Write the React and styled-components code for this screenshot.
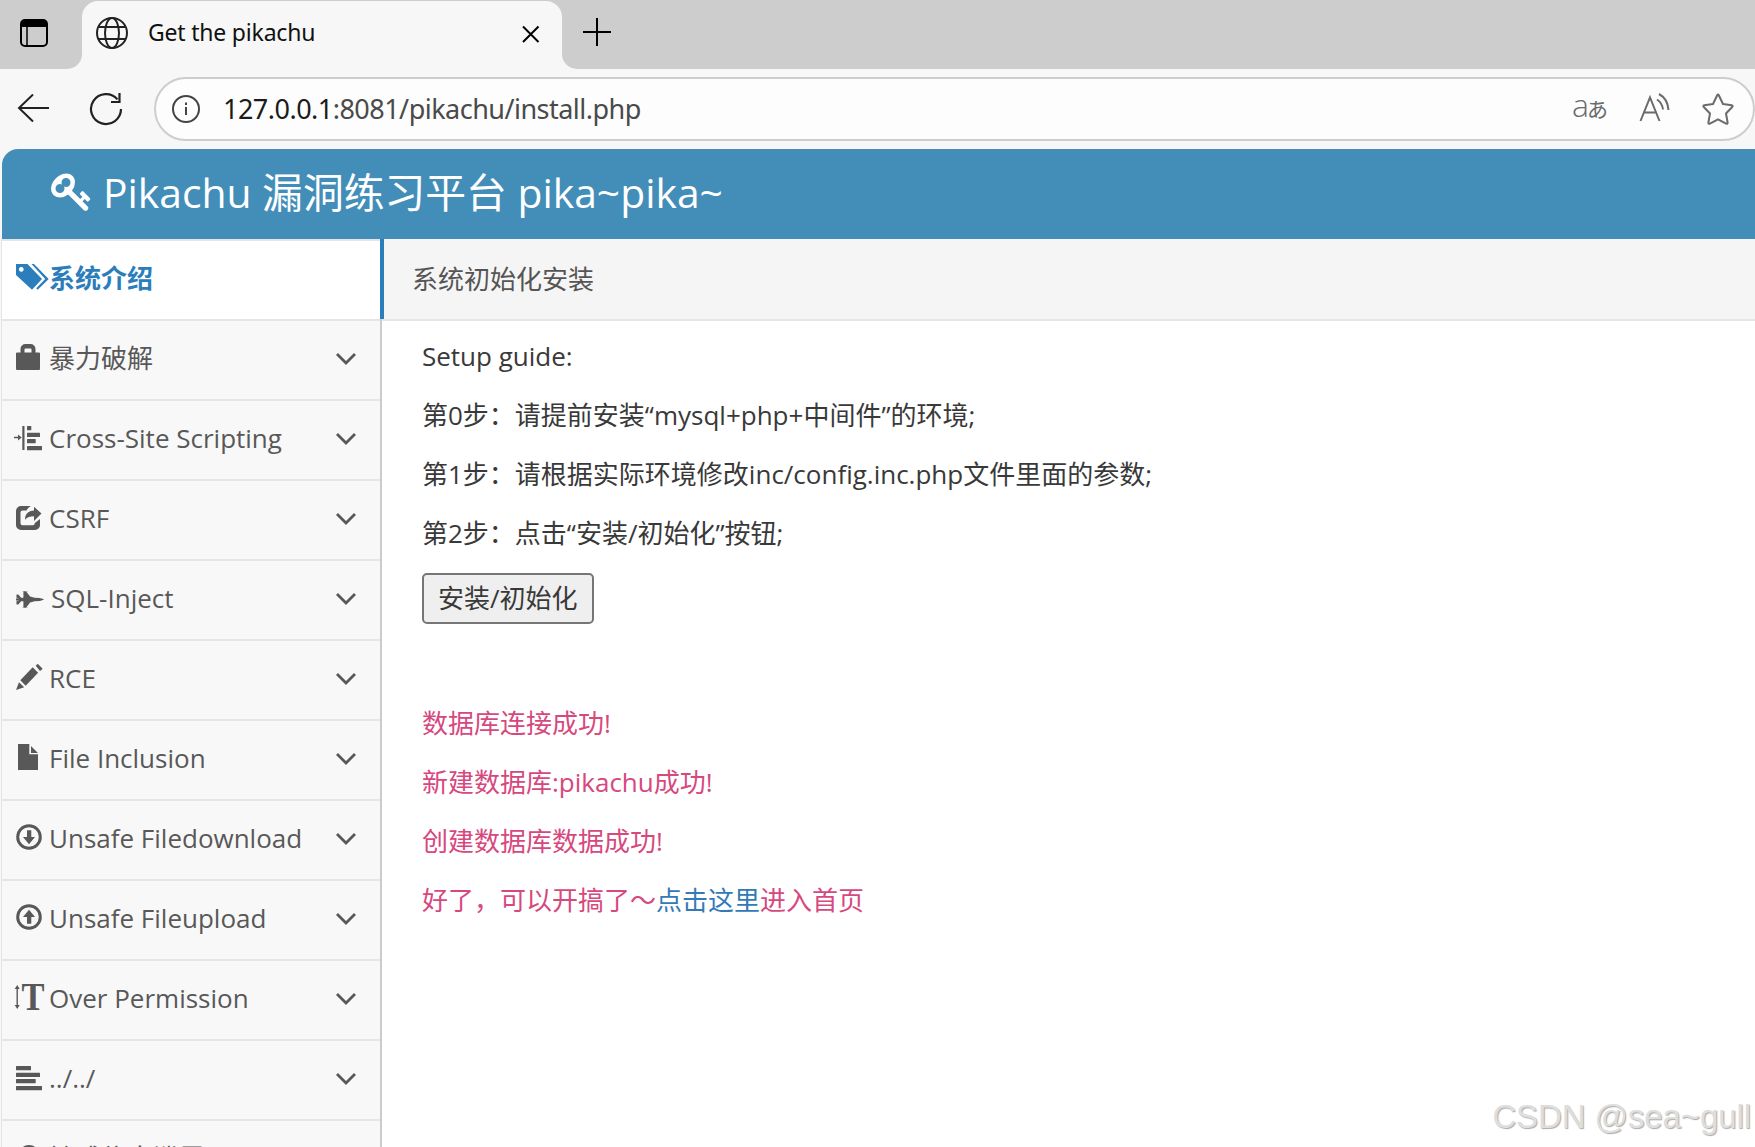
// src/App.jsx
import React from 'react';
import styled, { createGlobalStyle } from 'styled-components';

const GlobalStyle = createGlobalStyle`
  * {
    box-sizing: border-box;
  }

  body {
    margin: 0;
    background: #f7f7f7;
    overflow: hidden;
  }
`;

const Window = styled.div`
  width: 100%;
  height: 100vh;
  display: flex;
  flex-direction: column;
  overflow: hidden;
  font-family: 'Open Sans', 'Noto Sans CJK SC', sans-serif;
  font-size: 26px;
  line-height: 39px;
  color: #393939;
`;

const TabStrip = styled.div`
  display: flex;
  flex: none;
  height: 69px;
`;

const StripStart = styled.div`
  width: 82px;
  padding: 19px 0 0 20px;
  background: #cdcdcd;
  border-bottom-right-radius: 15px;
`;

const TabSlot = styled.div`
  width: 480px;
  padding-top: 1px;
  background: #cdcdcd;
`;

const Tab = styled.div`
  display: flex;
  align-items: center;
  height: 68px;
  padding: 0 21px 4px 14px;
  background: #f7f7f7;
  border-radius: 16px 16px 0 0;
`;

const TabTitle = styled.span`
  flex: 1;
  margin-left: 20px;
  padding-bottom: 2px;
  font-family: 'Noto Sans', sans-serif;
  font-size: 23px;
  letter-spacing: -0.2px;
  color: #111;
`;

const StripEnd = styled.div`
  flex: 1;
  padding: 18px 0 0 21px;
  background: #cdcdcd;
  border-bottom-left-radius: 15px;
`;

const Toolbar = styled.div`
  display: flex;
  flex: none;
  align-items: center;
  height: 80px;
  padding-left: 17px;
`;

const ReloadSlot = styled.span`
  display: flex;
  margin: 0 31px 0 39px;
`;

const AddressBar = styled.div`
  display: flex;
  flex: 1;
  align-items: center;
  height: 64px;
  padding: 0 18px 0 16px;
  background: #fdfdfd;
  border: 2px solid #cdcdcd;
  border-radius: 32px;
`;

const Address = styled.span`
  flex: 1;
  margin-left: 22px;
  padding-bottom: 2px;
  font-family: 'Noto Sans', sans-serif;
  font-size: 27px;
  letter-spacing: -0.52px;
  color: #4a4a4a;

  b {
    font-weight: 400;
    color: #1b1b1b;
  }
`;

const AddressActions = styled.div`
  display: flex;
  align-items: center;
  gap: 30px;
`;

const Page = styled.div`
  display: flex;
  flex: 1;
  flex-direction: column;
  min-height: 0;
  margin-left: 2px;
`;

const Navbar = styled.header`
  display: flex;
  flex: none;
  align-items: flex-start;
  height: 90px;
  padding: 13px 0 0 49px;
  background: #438eb9;
  border-top-left-radius: 16px;
  color: #fff;
  font-size: 40.8px;
  line-height: 60px;
`;

const NavbarKey = styled.svg`
  flex: none;
  width: 42px;
  height: 54px;
  margin-top: 1px;
  fill: #fff;
`;

const Brand = styled.span`
  margin-left: 10px;
  white-space: nowrap;
`;

const Main = styled.div`
  display: flex;
  flex: 1;
  min-height: 0;
`;

const Sidebar = styled.nav`
  flex: none;
  width: 380px;
  background: #f8f8f8;
  border-right: 2px solid #ccc;
  box-shadow: -1px 0 #e5e5e5;
`;

const MenuItem = styled.a`
  display: flex;
  align-items: flex-start;
  position: relative;
  height: 80px;
  padding: 18px 24px 0 12px;
  border-top: 2px solid #e5e5e5;
  background: ${({ $active }) => ($active ? '#fff' : 'transparent')};
  color: ${({ $active }) => ($active ? '#2b7dbc' : '#585858')};
  font-weight: ${({ $active }) => ($active ? 700 : 400)};
  text-decoration: none;

  &::after {
    content: '';
    display: ${({ $active }) => ($active ? 'block' : 'none')};
    position: absolute;
    top: -2px;
    right: -4px;
    width: 4px;
    height: 80px;
    background: #2b7dbc;
  }
`;

const MenuLabel = styled.span`
  flex: 1;
  white-space: nowrap;
  padding-left: ${({ $indent }) => $indent || 0}px;
`;

const MenuIcon = styled.svg`
  flex: none;
  width: 35px;
  height: 34px;
  fill: currentColor;
  overflow: visible;
`;

const Chevron = styled.svg`
  flex: none;
  width: 20px;
  height: 12px;
  margin-top: 14px;
  fill: none;
  stroke: #585858;
  stroke-width: 2.8;
`;

const Content = styled.main`
  flex: 1;
  min-width: 0;
  background: #fff;
`;

const Breadcrumbs = styled.div`
  height: 82px;
  padding: 21px 0 0 30px;
  background: #f5f5f5;
  border-bottom: 2px solid #e5e5e5;
  color: #555;
`;

const Guide = styled.div`
  padding: 16px 0 0 40px;

  p {
    height: 39px;
    margin: 0 0 20px;
    white-space: nowrap;
  }
`;

const InstallButton = styled.button`
  display: block;
  height: 51px;
  margin: 1px 0 80px;
  padding: 0 14px;
  background: #efefef;
  border: 2px solid #767676;
  border-radius: 5px;
  color: inherit;
  font: inherit;
  line-height: 47px;
`;

const Message = styled.p`
  color: #d6487e;

  a {
    color: #337ab7;
    text-decoration: none;
  }
`;

const Watermark = styled.div`
  position: absolute;
  right: 4px;
  bottom: 10px;
  font-family: 'Liberation Sans', sans-serif;
  font-size: 33px;
  line-height: 40px;
  letter-spacing: -0.1px;
  color: #dedede;
  text-shadow: 1px 1px 1px #aaa;
`;

const icons = {
  tags: (
    <>
      <path fillRule="evenodd" d="M2 5h11.500L28 20 18 30.700 2 16zM7.300 8a2.400 2.400 0 1 0 .01 0z" />
      <path d="M17.500 5h2.500L34.700 20 23.700 30.700l-1.500-1.500L31.200 20z" />
    </>
  ),
  lock: (
    <path
      fillRule="evenodd"
      d="M6.500 13.500V10a5 5 0 0 1 5-5h5a5 5 0 0 1 5 5v3.500H25a1 1 0 0 1 1 1V30a1 1 0 0 1-1 1H3a1 1 0 0 1-1-1V14.500a1 1 0 0 1 1-1zM10.500 13.500h7V10.500a1 1 0 0 0-1-1h-5a1 1 0 0 0-1 1z"
    />
  ),
  indent: (
    <>
      <path d="M0 17.700h4V15.500l3.700 3-3.700 3v-2.200H0zM8.300 7h2.200v24H8.300z" />
      <rect x="13" y="7" width="4.300" height="4.300" rx="0.500" />
      <rect x="13" y="13.700" width="13" height="4.300" rx="0.500" />
      <rect x="13" y="20" width="8.700" height="4.300" rx="0.500" />
      <rect x="13" y="27" width="15" height="4.300" rx="0.500" />
    </>
  ),
  share: (
    <>
      <path
        d="M17 7c-2 1-3.500 2.500-4.500 4.500H8.500a2 2 0 0 0-2 2v10.800a2 2 0 0 0 2 2h10.300a2 2 0 0 0 2-2V24L26 20v6a5 5 0 0 1-5 5H7a5 5 0 0 1-5-5V12a5 5 0 0 1 5-5z"
      />
      <path d="M20 7.800l7.500 6.700L20 22v-4.700c-4 0-6.500.8-9 3.500 0-6 3.500-9 9-9.300z" />
    </>
  ),
  jet: (
    <path
      transform="translate(2 6.600) scale(.01448)"
      d="M1920 960q-1 32-288 96l-352 32-224 64h-64l-293 352h69q26 0 45 4.500t19 11.500-19 11.500-45 4.500h-320v-32h64v-416h-160l-192 224h-96l-32-32v-192h32v-32h128v-8l-192-24v-128l192-24v-8h-128v-32h-32v-192l32-32h96l192 224h160v-416h-64v-32h320q26 0 45 4.500t19 11.500-19 11.500-45 4.500h-69l293 352h64l224 64 352 32q128 28 200 52t80 34z"
    />
  ),
  pencil: (
    <path d="M21.700 6.700l1.500-1.500q.5-.5 1 0l4 4q.5.500 0 1L26 12zM18.700 8.300l5.400 5.400-12.400 13-5.400-5.400zM2 31l3-7.700 5.200 5z" />
  ),
  file: <path d="M4 5h11.300v10.300H24V31H4zM17 7l7 7h-7z" />,
  download: (
    <>
      <circle cx="15" cy="18" r="11.300" fill="none" stroke="currentColor" strokeWidth="3" />
      <path d="M13 11.300h4.300V18H21l-6 7.300L9 18h4z" />
    </>
  ),
  upload: (
    <>
      <circle cx="15" cy="18" r="11.300" fill="none" stroke="currentColor" strokeWidth="3" />
      <path d="M13 24.700h4.300V18H21l-6-7.300L9 18h4z" />
    </>
  ),
  height: (
    <>
      <path d="M3.200 6L5.700 10H3.900v16h1.800l-2.500 4-2.500-4h1.800V10H.7z" />
      <text
        x="7.500"
        y="31"
        fontFamily="Liberation Serif, serif"
        fontWeight="700"
        fontSize="39"
        textLength="23"
        lengthAdjust="spacingAndGlyphs"
      >
        T
      </text>
    </>
  ),
  align: (
    <>
      <rect x="2" y="7" width="15" height="4.300" rx="0.500" />
      <rect x="2" y="13.700" width="24" height="4.300" rx="0.500" />
      <rect x="2" y="20" width="19.700" height="4.300" rx="0.500" />
      <rect x="2" y="27" width="26" height="4.300" rx="0.500" />
    </>
  ),
  eye: (
    <path d="M15 6c-6 0-10 5-12 9 2 4 6 9 12 9s10-5 12-9c-2-4-6-9-12-9z" />
  ),
};

const menu = [
  { icon: 'tags', label: '系统介绍', active: true },
  { icon: 'lock', label: '暴力破解' },
  { icon: 'indent', label: 'Cross-Site Scripting' },
  { icon: 'share', label: 'CSRF' },
  { icon: 'jet', label: 'SQL-Inject', indent: 2 },
  { icon: 'pencil', label: 'RCE' },
  { icon: 'file', label: 'File Inclusion' },
  { icon: 'download', label: 'Unsafe Filedownload' },
  { icon: 'upload', label: 'Unsafe Fileupload' },
  { icon: 'height', label: 'Over Permission' },
  { icon: 'align', label: '../../' },
  { icon: 'eye', label: '敏感信息泄露' },
];

const BrowserTabs = () => (
  <TabStrip>
    <StripStart>
      <svg width="28" height="28" viewBox="0 0 28 28" style={{ display: 'block' }}>
        <rect x="1" y="1" width="26" height="26" rx="4" fill="none" stroke="#000" strokeWidth="2" />
        <path d="M1 8V5a4 4 0 0 1 4-4h18a4 4 0 0 1 4 4v3z" />
        <path d="M7 8v19" stroke="#000" strokeWidth="1.500" />
      </svg>
    </StripStart>
    <TabSlot>
      <Tab>
        <svg width="32" height="32" viewBox="0 0 32 32" fill="none" stroke="#222" strokeWidth="2">
          <circle cx="16" cy="16" r="15" />
          <ellipse cx="16" cy="16" rx="7" ry="15" />
          <path d="M2.500 10h27M2.500 22h27" />
        </svg>
        <TabTitle>Get the pikachu</TabTitle>
        <svg width="20" height="20" viewBox="0 0 20 20" stroke="#000" strokeWidth="2">
          <path d="M2 3.500l15.500 15.500M17.500 3.500L2 19" />
        </svg>
      </Tab>
    </TabSlot>
    <StripEnd>
      <svg width="28" height="28" viewBox="0 0 28 28" stroke="#000" strokeWidth="2" style={{ display: 'block' }}>
        <path d="M14 0v28M0 14h28" />
      </svg>
    </StripEnd>
  </TabStrip>
);

const BrowserToolbar = () => (
  <Toolbar>
    <svg width="33" height="30" viewBox="0 0 33 30" fill="none" stroke="#222" strokeWidth="2">
      <path d="M32 14H2M16 0.500L2 14 16 27.500" />
    </svg>
    <ReloadSlot>
      <svg width="34" height="34" viewBox="0 0 34 34" fill="none" stroke="#222" strokeWidth="2.200">
        <path d="M32 17a15 15 0 1 1-3.500-9.600M30.500 1v9H22" />
      </svg>
    </ReloadSlot>
    <AddressBar>
      <svg width="29" height="29" viewBox="0 0 29 29" fill="none" stroke="#444" strokeWidth="2">
        <circle cx="14" cy="14" r="13" />
        <path d="M14 12v8M14 7.500v2.500" />
      </svg>
      <Address>
        <b>127.0.0.1</b>:8081/pikachu/install.php
      </Address>
      <AddressActions>
        <svg width="36" height="48" viewBox="0 0 36 48" fill="#6b6b6b">
          <text x="-1" y="32" fontFamily="Open Sans, sans-serif" fontSize="32" fontWeight="300">a</text>
          <text x="14" y="32" fontFamily="Noto Sans CJK JP, sans-serif" fontSize="21">あ</text>
        </svg>
        <svg width="32" height="32" viewBox="0 0 32 32" fill="none" stroke="#6b6b6b" strokeWidth="2">
          <path d="M1.500 28L11 4.500 20.500 28M4.800 19.500h12.400" />
          <path d="M18 6.500c3 2 5.500 5.500 6 10M20 1c5.500 3 9 8.500 9.500 16" />
        </svg>
        <svg width="34" height="34" viewBox="0 0 34 34" fill="none" stroke="#6b6b6b" strokeWidth="2" strokeLinejoin="round">
          <path d="M16.200 3.300q.8-1.500 1.600 0L22 12l8.700 1.300q1.700.4.500 1.700L25 21.500l1.600 9q.1 1.800-1.500 1.100L17 27.300l-8.100 4.300q-1.600.7-1.500-1.100l1.600-9L2.800 15q-1.200-1.300.5-1.700L12 12z" />
        </svg>
      </AddressActions>
    </AddressBar>
  </Toolbar>
);

const SideMenu = () => (
  <Sidebar>
    {menu.map((item) => (
      <MenuItem key={item.label} $active={item.active}>
        <MenuIcon viewBox="0 0 35 34">{icons[item.icon]}</MenuIcon>
        <MenuLabel $indent={item.indent}>{item.label}</MenuLabel>
        {!item.active && (
          <Chevron viewBox="0 0 20 12">
            <path d="M1 1l9 9 9-9" />
          </Chevron>
        )}
      </MenuItem>
    ))}
  </Sidebar>
);

const App = () => (
  <Window>
    <GlobalStyle />
    <BrowserTabs />
    <BrowserToolbar />
    <Page>
      <Navbar>
        <NavbarKey viewBox="0 0 1792 2304">
          <path d="M832 832q0-80-56-136t-136-56-136 56-56 136q0 42 19 83-41-19-83-19-80 0-136 56t-56 136 56 136 136 56 136-56 56-136q0-42-19-83 41 19 83 19 80 0 136-56t56-136zm851 704q0 17-49 66t-66 49q-9 0-28.500-16t-36.500-33-38.500-40-24.500-26l-96 96 220 220q28 28 28 68 0 42-39 81t-81 39q-40 0-68-28l-671-671q-176 131-365 131-163 0-265.500-102.500t-102.500-265.500q0-160 95-313t248-248 313-95q163 0 265.500 102.500t102.500 265.500q0 189-131 365l355 355 96-96q-3-3-26-24.500t-40-38.500-33-36.500-16-28.500q0-17 49-66t66-49q13 0 23 10 6 6 46 44.500t82 79.500 86.500 86 73 78 28.500 41z" />
        </NavbarKey>
        <Brand>Pikachu 漏洞练习平台 pika~pika~</Brand>
      </Navbar>
      <Main>
        <SideMenu />
        <Content>
          <Breadcrumbs>系统初始化安装</Breadcrumbs>
          <Guide>
            <p>Setup guide:</p>
            <p>第0步：请提前安装“mysql+php+中间件”的环境;</p>
            <p>第1步：请根据实际环境修改inc/config.inc.php文件里面的参数;</p>
            <p>第2步：点击“安装/初始化”按钮;</p>
            <InstallButton type="button">安装/初始化</InstallButton>
            <Message>数据库连接成功!</Message>
            <Message>新建数据库:pikachu成功!</Message>
            <Message>创建数据库数据成功!</Message>
            <Message>
              好了，可以开搞了～<a>点击这里</a>进入首页
            </Message>
          </Guide>
        </Content>
      </Main>
    </Page>
    <Watermark>CSDN @sea~gull</Watermark>
  </Window>
);

export default App;
